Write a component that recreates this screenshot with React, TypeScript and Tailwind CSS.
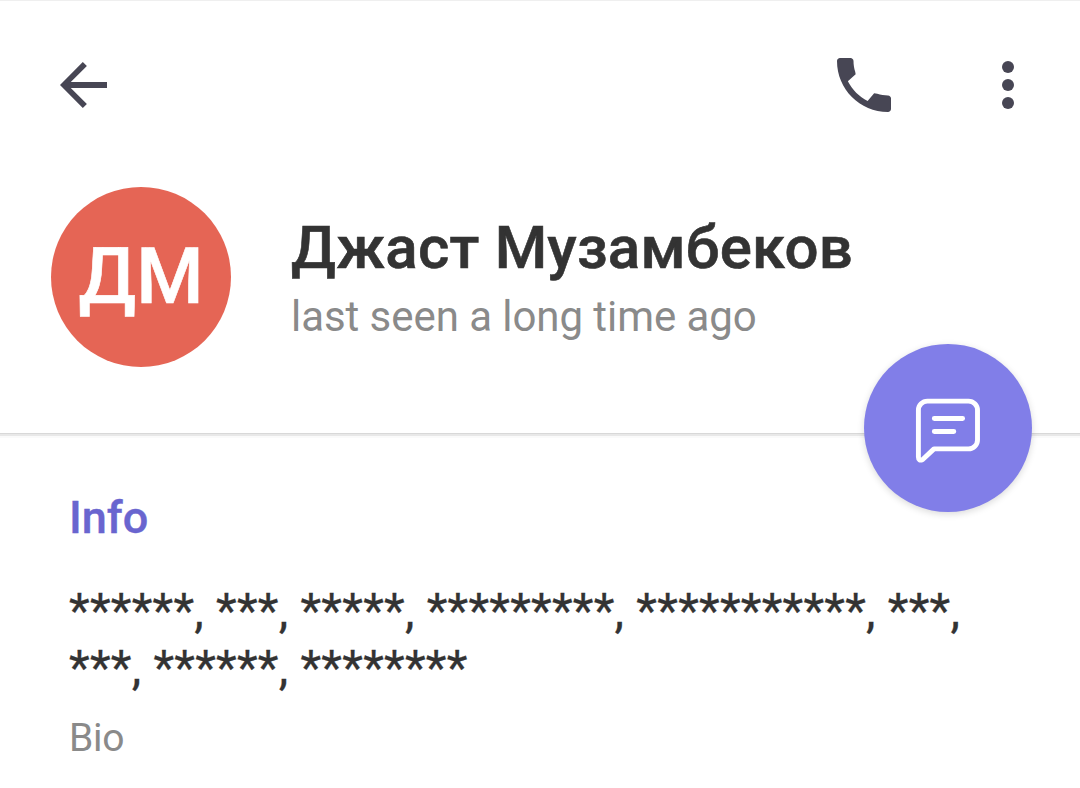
import React from 'react';

export default function App() {
  return (
    <main className="h-[788px] w-[1080px] overflow-hidden bg-white font-['Roboto',sans-serif] text-[#333333]">
      <header className="relative h-[433px] border-t border-[#efefef] shadow-[0_1px_0_#d8d8d8,0_3px_0_#e8e8e8,0_5px_0_#fafafa]">
        <nav className="flex h-[168px] items-center pl-[48px] pr-[36px] text-[#474654]">
          <button aria-label="Back" className="size-[72px]">
            <svg viewBox="0 0 72 72" fill="currentColor"><path d="M12 36 34.8 13l4.1 4.1L22.8 33H59v6H22.8l16.1 15.9-4.1 4.1Z" /></svg>
          </button>
          <button aria-label="Call" className="ml-auto size-[72px]">
            <svg viewBox="0 0 24 24" fill="currentColor"><path d="M20 15.5c-1.25 0-2.45-.2-3.57-.57l-1.05-.2-2.17 2.64c-2.83-1.44-5.15-3.75-6.59-6.59l2.6-2.35-.15-.86C8.7 6.45 8.5 5.25 8.5 4c0-.55-.45-1-1-1H4c-.55 0-1 .45-1 1 0 9.39 7.61 17 17 17 .55 0 1-.45 1-1v-3.5c0-.55-.45-1-1-1z" /></svg>
          </button>
          <button aria-label="More options" className="ml-[72px] size-[72px]">
            <svg viewBox="0 0 72 72" fill="currentColor"><circle cx="36" cy="18" r="6" /><circle cx="36" cy="36" r="6" /><circle cx="36" cy="54" r="6" /></svg>
          </button>
        </nav>
        <section className="flex pl-[51px] pt-[18px]">
          <div className="flex size-[180px] items-center justify-center rounded-full bg-[#e56555] pt-px text-[77px] font-medium leading-none text-white [-webkit-text-stroke:0.6px_white]">ДМ</div>
          <div className="ml-[60px] pt-[26px]">
            <h1 className="whitespace-nowrap text-[60px] font-medium leading-[70px] tracking-[0.23px] [-webkit-text-stroke:0.6px_#333333]">Джаст Музамбеков</h1>
            <p className="text-[42px] leading-[68px] tracking-[-0.06px] text-[#8a8a8a]">last seen a long time ago</p>
          </div>
        </section>
        <button aria-label="Send message" className="absolute left-[864px] top-[343px] flex size-[168px] items-center justify-center rounded-full bg-[#817ee8] text-white shadow-[0_2px_7px_rgba(0,0,0,0.15)]">
          <svg className="size-[72px]" viewBox="0 0 72 72" fill="none" stroke="currentColor" strokeWidth="4.9" strokeLinecap="round" strokeLinejoin="round"><path d="M15.5 9.1H56.5a9 9 0 0 1 9 9V47.9a9 9 0 0 1-9 9H22L10.7 67.5Q6.4 69.5 6.4 65V18.1a9 9 0 0 1 9-9ZM22.3 26.5H50.6M22.3 39.5H41.8" /></svg>
        </button>
      </header>
      <section className="px-[69px] pt-[55px]">
        <h2 className="text-[45px] font-medium leading-[60px] text-[#6965cf] [-webkit-text-stroke:0.4px_#6965cf]">Info</h2>
        <p className="mt-[34px] whitespace-nowrap text-[48px] leading-[57px] tracking-[0.21px] [-webkit-text-stroke:0.3px_#333333]">******, ***, *****, *********, ***********, ***,<br />***, ******, ********</p>
        <p className="mt-[18px] text-[39px] leading-[48px] tracking-[-0.3px] text-[#8a8a8a]">Bio</p>
      </section>
    </main>
  );
}
